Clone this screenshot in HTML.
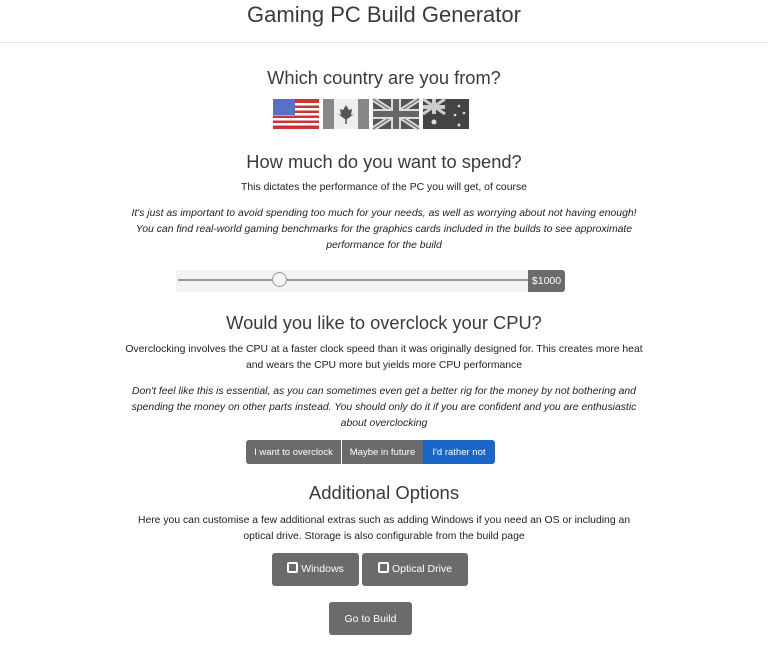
<!DOCTYPE html>
<html><head><style>
body{margin:0;width:768px;height:664px;background:#fff;font-family:"Liberation Sans",sans-serif;color:#222;position:relative;overflow:hidden}
.c{position:absolute;left:0;width:768px;text-align:center;white-space:nowrap}
.h{color:#3a3a3a;font-weight:300}
.t{font-size:10.4px;color:#222}
.i{font-style:italic}
.btn{position:absolute;background:#6b6b6b;color:#fff;font-size:10.5px;text-align:center;border-radius:3px}
</style></head><body>
<div class="c h" style="top:2px;font-size:22px">Gaming PC Build Generator</div>
<div style="position:absolute;top:42px;left:0;width:768px;height:1px;background:#e5e5e5"></div>
<div class="c h" style="top:67px;font-size:18.3px">Which country are you from?</div>
<svg style="position:absolute;left:272px;top:98px" width="198" height="32">
<g><rect x="1" y="1" width="46" height="30" fill="#c33"/>
<g fill="#fff"><rect x="1" y="5" width="46" height="2.5"/><rect x="1" y="10" width="46" height="2.5"/><rect x="1" y="15" width="46" height="2.5"/><rect x="1" y="20" width="46" height="2.5"/><rect x="1" y="25" width="46" height="2.5"/></g>
<rect x="1" y="1" width="22" height="16" fill="#5a6fc9"/></g>
<g transform="translate(50,0)"><rect x="1" y="1" width="46" height="30" fill="#888"/><rect x="12" y="1" width="24" height="30" fill="#eee"/><path d="M24 7l3 5 3-1-1 6 3-1-8 6-8-6 3 1-1-6 3 1z" fill="#555"/><rect x="23.3" y="20" width="1.5" height="6" fill="#555"/></g>
<g transform="translate(100,0)"><rect x="1" y="1" width="46" height="30" fill="#555"/><path d="M1 1L47 31M47 1L1 31" stroke="#ddd" stroke-width="5"/><path d="M1 1L47 31M47 1L1 31" stroke="#777" stroke-width="1.5"/><rect x="19" y="1" width="10" height="30" fill="#ddd"/><rect x="1" y="11" width="46" height="10" fill="#ddd"/><rect x="21" y="1" width="6" height="30" fill="#666"/><rect x="1" y="13" width="46" height="6" fill="#666"/></g>
<g transform="translate(150,0)"><rect x="1" y="1" width="46" height="30" fill="#444"/><path d="M1 1L23 16M23 1L1 16" stroke="#ccc" stroke-width="3"/><rect x="10" y="1" width="4" height="15" fill="#ccc"/><rect x="1" y="7" width="22" height="4" fill="#ccc"/><g fill="#ddd"><circle cx="12" cy="24" r="2.5"/><circle cx="37" cy="8" r="1.3"/><circle cx="42" cy="15" r="1.3"/><circle cx="33" cy="17" r="1.3"/><circle cx="37" cy="27" r="1.5"/></g></g>
</svg>
<div class="c h" style="top:151px;font-size:18.3px">How much do you want to spend?</div>
<div class="c t" style="top:182px">This dictates the performance of the PC you will get, of course</div>
<div class="c t i" style="top:208px">It's just as important to avoid spending too much for your needs, as well as worrying about not having enough!</div>
<div class="c t i" style="top:224px">You can find real-world gaming benchmarks for the graphics cards included in the builds to see approximate</div>
<div class="c t i" style="top:240px">performance for the build</div>
<div style="position:absolute;left:176px;top:270px;width:356px;height:22px;background:#f4f4f4;border-radius:3px"></div>
<div style="position:absolute;left:178px;top:279px;width:350px;height:2px;background:#999"></div>
<div style="position:absolute;left:272px;top:272px;width:13px;height:13px;border:1px solid #999;border-radius:50%;background:#f5f5f5"></div>
<div class="btn" style="left:528px;top:270px;width:37px;height:22px;line-height:22px;border-radius:0 3px 3px 0">$1000</div>
<div class="c h" style="top:312px;font-size:18.3px">Would you like to overclock your CPU?</div>
<div class="c t" style="top:344px">Overclocking involves the CPU at a faster clock speed than it was originally designed for. This creates more heat</div>
<div class="c t" style="top:360px">and wears the CPU more but yields more CPU performance</div>
<div class="c t i" style="top:386px">Don't feel like this is essential, as you can sometimes even get a better rig for the money by not bothering and</div>
<div class="c t i" style="top:402px">spending the money on other parts instead. You should only do it if you are confident and you are enthusiastic</div>
<div class="c t i" style="top:418px">about overclocking</div>
<div class="btn" style="left:246px;top:440px;width:95px;height:24px;line-height:25px;font-size:9.5px;border-radius:3px 0 0 3px">I want to overclock</div>
<div class="btn" style="left:342px;top:440px;width:81px;height:24px;line-height:25px;font-size:9.5px;border-radius:0">Maybe in future</div>
<div class="btn" style="left:423px;top:440px;width:72px;height:24px;line-height:25px;font-size:9.5px;background:#1a66c9;border-radius:0 3px 3px 0">I'd rather not</div>
<div class="c h" style="top:482px;font-size:18.5px">Additional Options</div>
<div class="c t" style="top:515px">Here you can customise a few additional extras such as adding Windows if you need an OS or including an</div>
<div class="c t" style="top:531px">optical drive. Storage is also configurable from the build page</div>
<div class="btn" style="left:272px;top:553px;width:87px;height:33px;line-height:33px"><span style="display:inline-block;width:7px;height:7px;border:2px solid #fff;border-radius:2px;vertical-align:-1px;margin-right:3px"></span>Windows</div>
<div class="btn" style="left:362px;top:553px;width:106px;height:33px;line-height:33px"><span style="display:inline-block;width:7px;height:7px;border:2px solid #fff;border-radius:2px;vertical-align:-1px;margin-right:3px"></span>Optical Drive</div>
<div class="btn" style="left:329px;top:602px;width:83px;height:33px;line-height:34px">Go to Build</div>
</body></html>
